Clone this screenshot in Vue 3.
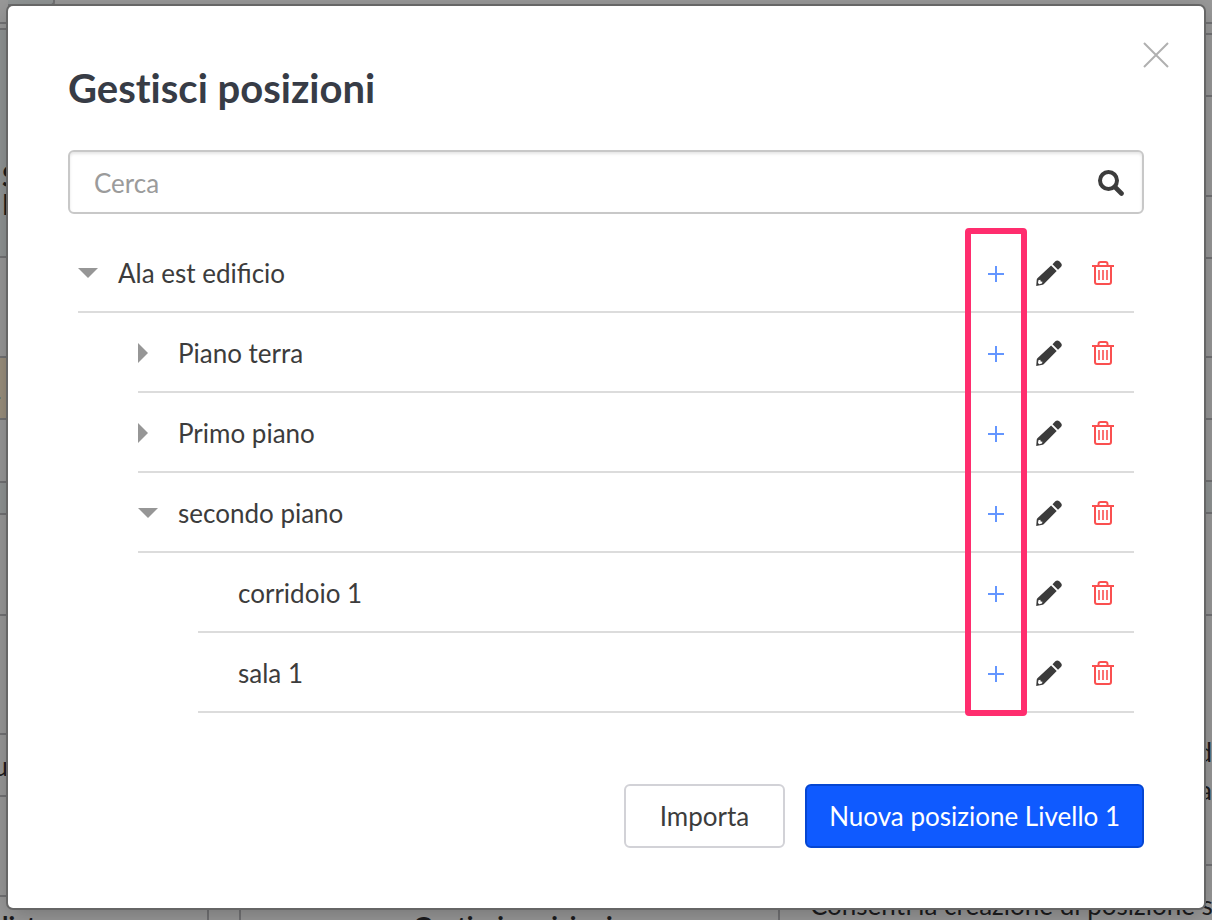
<template>
  <div class="screen">
    <div class="page" aria-hidden="true">
      <div class="strip">
        <div v-for="(band, i) in leftBands" :key="i" class="band" :class="band.kind" :style="{ height: band.height + 'px' }">
          <span v-for="line in band.lines" :key="line">{{ line }}</span>
        </div>
      </div>
      <div class="middle">
        <div class="tab"></div>
        <div class="cells">
          <div class="cell first">lista</div>
          <div class="cell gap"></div>
          <div class="cell second">Gestisci posizioni</div>
          <div class="cell last">Consenti la creazione di posizione su</div>
        </div>
      </div>
      <div class="strip right">
        <div v-for="(band, i) in rightBands" :key="i" class="band" :class="band.kind" :style="{ height: band.height + 'px' }">
          <span v-for="line in band.lines" :key="line">{{ line }}</span>
        </div>
      </div>
    </div>

    <div class="modal" role="dialog" aria-labelledby="title">
      <button class="close" type="button" aria-label="Chiudi">
        <svg width="26" height="26" viewBox="0 0 26 26">
          <path d="M1 1L25 25M25 1L1 25" fill="none" stroke="#b0b0b0" stroke-width="2" />
        </svg>
      </button>
      <h1 id="title">Gestisci posizioni</h1>

      <div class="search">
        <input v-model="query" type="text" placeholder="Cerca" aria-label="Cerca" />
        <svg width="26" height="26" viewBox="0 0 26 26">
          <circle cx="10.500" cy="10.500" r="8.500" fill="none" stroke="#3c3c3c" stroke-width="4" />
          <path d="M17 17L23.500 23.500" stroke="#3c3c3c" stroke-width="4.600" stroke-linecap="round" />
        </svg>
      </div>

      <div class="tree">
        <div v-for="row in rows" :key="row.name" class="row" :class="'level' + row.level">
          <button v-if="row.state" class="toggle" type="button" :aria-label="row.name" @click="toggle(row)">
            <span class="arrow" :class="row.state"></span>
          </button>
          <span v-else class="toggle"></span>
          <span class="name">{{ row.name }}</span>
          <button class="action add" type="button" aria-label="Aggiungi">
            <svg width="16" height="18" viewBox="0 0 16 18">
              <path d="M8 2V18M0 10H16" stroke="#6496ff" stroke-width="2" />
            </svg>
          </button>
          <button class="action edit" type="button" aria-label="Modifica">
            <svg width="26" height="26" viewBox="0 0 26 26">
              <path fill="#3c3c3c" d="M16.500 4.200L19.300 1.300Q21.300-.5 23.300 1.300L24.900 2.900Q26.700 5 24.900 6.900L22 9.700Z" />
              <path fill="#3c3c3c" fill-rule="evenodd" d="M15.100 5.500L20.700 11.100L7.900 23.900Q7.300 24.500 6.500 24.700L.2 26L.7 19.700Q.8 18.900 1.400 18.300ZM2.400 20.200L2 23.100L3.200 24.200L5.900 23.600L6.500 21.700L4.700 21.600L4.300 19.700Z" />
            </svg>
          </button>
          <button class="action remove" type="button" aria-label="Elimina">
            <svg width="22" height="26" viewBox="0 0 22 26">
              <g fill="none" stroke="#fa5050" stroke-width="2">
                <path d="M0 6H22M6.500 6V4Q6.500 2 8.500 2H13.500Q15.500 2 15.500 4V6" />
                <path d="M3 6V22Q3 24 5 24H17Q19 24 19 22V6" />
                <path d="M7 10V20M11 10V20M15 10V20" stroke-width="1.600" />
              </g>
            </svg>
          </button>
        </div>
        <div class="highlight"></div>
      </div>

      <div class="footer">
        <button class="btn" type="button">Importa</button>
        <button class="btn primary" type="button">Nuova posizione Livello 1</button>
      </div>
    </div>
  </div>
</template>

<script setup>
import { ref } from "vue";

const query = ref("");

const rows = ref([
  { name: "Ala est edificio", level: 0, state: "open" },
  { name: "Piano terra", level: 1, state: "closed" },
  { name: "Primo piano", level: 1, state: "closed" },
  { name: "secondo piano", level: 1, state: "open" },
  { name: "corridoio 1", level: 2, state: "" },
  { name: "sala 1", level: 2, state: "" },
]);

const leftBands = [
  { height: 24 },
  { height: 6 },
  { height: 228, kind: "cool bold", lines: ["S", "N"] },
  { height: 100 },
  { height: 62, kind: "tan", lines: ["-"] },
  { height: 63 },
  { height: 32, kind: "cool" },
  { height: 101 },
  { height: 119 },
  { height: 62, kind: "tail", lines: ["u"] },
  { height: 100 },
];

const rightBands = [
  { height: 24 },
  { height: 11 },
  { height: 62 },
  { height: 100 },
  { height: 62 },
  { height: 99 },
  { height: 62 },
  { height: 62 },
  { height: 32, kind: "cool" },
  { height: 102 },
  { height: 250, kind: "words", lines: ["d", "a"] },
];

function toggle(row) {
  row.state = row.state === "open" ? "closed" : "open";
}
</script>

<style>
body {
  margin: 0;
}
</style>

<style scoped>
* {
  box-sizing: border-box;
}

.screen {
  position: relative;
  min-height: 100vh;
  padding: 6px 8px 12px;
  overflow: hidden;
  font-family: Lato, "Liberation Sans", sans-serif;
  font-size: 26px;
  color: #3c3c3c;
}

/* dimmed page under the dialog */
.page {
  position: absolute;
  inset: 0;
  display: flex;
  background-color: #999;
  color: #1c1c1e;
  overflow: hidden;
}

.strip {
  width: 8px;
  flex-shrink: 0;
}

.band {
  border-bottom: 2px solid #737375;
  line-height: 38px;
}

.band span {
  display: block;
}

.cool {
  background-color: #919595;
}

.bold {
  padding: 132px 0 0 2px;
  font-size: 28px;
  font-weight: bold;
  line-height: 28px;
}

.tan {
  padding-top: 19px;
  background-color: #9c917f;
}

.tan span {
  margin-left: -8px;
}

.tail {
  direction: rtl;
  padding-top: 12px;
}

.words {
  padding-top: 117px;
}

.right .words span {
  direction: rtl;
}

.middle {
  flex: 1;
  min-width: 0;
  display: flex;
  flex-direction: column;
  justify-content: space-between;
  white-space: nowrap;
}

.tab {
  width: 47px;
  height: 6px;
  border: 2px solid #737375;
  border-width: 0 2px 2px 0;
  border-radius: 0 0 4px 0;
  background-color: #919595;
}

.cells {
  display: flex;
}

.cell {
  height: 24px;
  padding-top: 14px;
  line-height: 32px;
  border-right: 2px solid #737375;
}

.first {
  width: 209px;
  margin-left: -8px;
  padding-left: 2px;
  font-weight: bold;
}

.gap {
  width: 32px;
}

.second {
  flex: 1;
  padding-left: 172px;
  font-weight: bold;
  font-variant-ligatures: none;
}

.last {
  width: 424px;
  padding: 0 0 0 30px;
  border-right: 0;
  line-height: 18px;
}

.modal {
  position: relative;
  min-height: 902px;
  padding: 56px 60px 60px;
  background-color: #fff;
  border-radius: 5px;
  box-shadow: 0 0 0 2px #666, 0 6px 24px rgba(0, 0, 0, .25);
}

button {
  padding: 0;
  border: 0;
  background: none;
  font: inherit;
  color: inherit;
  cursor: pointer;
}

svg {
  display: block;
}

.close {
  position: absolute;
  top: 36px;
  right: 35px;
}

h1 {
  margin: 0 0 36px;
  font-size: 40px;
  line-height: 52px;
  font-weight: bold;
  font-variant-ligatures: none;
  color: #373c46;
}

.search {
  display: flex;
  align-items: center;
  height: 64px;
  padding: 2px 18px 0 24px;
  border: 2px solid #c8c8c8;
  border-radius: 6px;
  box-shadow: inset 0 2px 3px rgba(0, 0, 0, .1);
}

.search input {
  flex: 1;
  min-width: 0;
  padding: 0;
  border: 0;
  outline: 0;
  background: none;
  font: inherit;
  color: inherit;
}

.search input::placeholder {
  color: #9b9b9b;
  opacity: 1;
}

.tree {
  position: relative;
  margin-top: 19px;
  padding: 0 10px;
}

.row {
  display: flex;
  align-items: center;
  height: 80px;
  padding: 2px 20px 0 0;
  border-bottom: 2px solid #dcdcdc;
}

.level1 {
  margin-left: 60px;
}

.level2 {
  margin-left: 120px;
}

.toggle {
  width: 40px;
  text-align: left;
}

.arrow {
  display: block;
  width: 20px;
  height: 20px;
  background-color: #969696;
}

.open {
  clip-path: polygon(0 25%, 100% 25%, 50% 75%);
}

.closed {
  clip-path: polygon(0 0, 50% 50%, 0 100%);
}

.name {
  flex: 1;
}

.edit {
  margin-left: 32px;
}

.remove {
  margin-left: 30px;
}

.highlight {
  position: absolute;
  top: -5px;
  right: 117px;
  bottom: -3px;
  width: 62px;
  border: 6px solid #ff2d6e;
  border-radius: 4px;
  pointer-events: none;
}

.footer {
  display: flex;
  justify-content: flex-end;
  gap: 20px;
  margin-top: 71px;
}

.btn {
  height: 64px;
  padding: 0 34px;
  border: 2px solid #d2d2d7;
  border-radius: 6px;
  background-color: #fff;
}

.primary {
  padding: 0 22px;
  border-color: #0546d2;
  background-color: #0f5aff;
  color: #fff;
}
</style>
